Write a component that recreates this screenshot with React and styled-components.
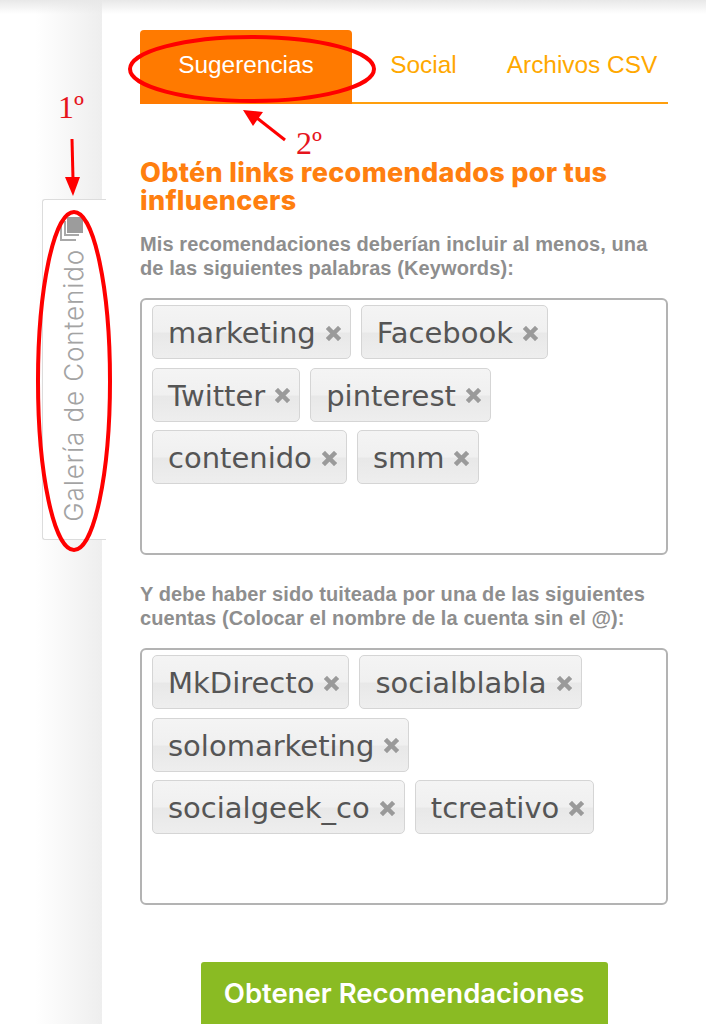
import React from 'react'
import styled, { createGlobalStyle } from 'styled-components'

const GlobalStyle = createGlobalStyle`
  html, body {
    margin: 0;
    padding: 0;
    background: #fff;
  }
`

const Page = styled.div`
  position: relative;
  display: flex;
  width: 706px;
  height: 1024px;
  overflow: hidden;
  background: #fff;
  &::before {
    content: '';
    position: absolute;
    top: 0;
    left: 0;
    right: 0;
    height: 14px;
    background: linear-gradient(to bottom, #e8e8e8, rgba(255, 255, 255, 0));
  }
`

const Rail = styled.aside`
  flex: 0 0 102px;
  min-width: 0;
  box-sizing: border-box;
  padding: 199px 0 0 42px;
  background: linear-gradient(to right, #fff 35%, #eeeeee 100%);
`

const SideTab = styled.div`
  position: relative;
  box-sizing: border-box;
  display: flex;
  flex-direction: column;
  align-items: center;
  width: 64px;
  height: 341px;
  padding: 17px 6px 0 0;
  background: #fff;
  border: 1px solid #dcdcdc;
  border-right: 0;
  border-radius: 3px 0 0 3px;
`

const SideLabel = styled.span`
  writing-mode: vertical-rl;
  transform: rotate(180deg);
  margin: 8px 0 0 4px;
  font-family: 'Inter', sans-serif;
  font-size: 26px;
  font-weight: 300;
  line-height: 30px;
  letter-spacing: 0.9px;
  white-space: nowrap;
  color: #a3a3a3;
`

const Main = styled.main`
  flex: 0 0 528px;
  margin-left: 38px;
  padding-top: 30px;
`

const Tabs = styled.nav`
  display: flex;
  height: 74px;
  border-bottom: 2px solid #ff9f0d;
  box-sizing: border-box;
`

const Tab = styled.div`
  display: flex;
  justify-content: center;
  box-sizing: border-box;
  flex: none;
  width: ${(p) => p.$width}px;
  margin-left: ${(p) => p.$gap || 0}px;
  padding-top: 20px;
  height: 74px;
  font-family: 'Liberation Sans', Arial, sans-serif;
  font-size: 24.4px;
  line-height: 30px;
  white-space: nowrap;
  color: ${(p) => (p.$active ? '#fff' : '#ffa800')};
  background: ${(p) => (p.$active ? '#ff7a00' : 'transparent')};
  border-radius: ${(p) => (p.$active ? '4px 4px 0 0' : '0')};
`

const Heading = styled.h1`
  margin: 55px 0 0;
  font-family: 'Inter', sans-serif;
  font-size: 27px;
  font-weight: 800;
  line-height: 28px;
  letter-spacing: 0.3px;
  color: #ff7f0f;
`

const Label = styled.p`
  margin: ${(p) => p.$top}px 0 0;
  font-family: 'Liberation Sans', Arial, sans-serif;
  font-size: 20px;
  font-weight: 700;
  line-height: 24px;
  letter-spacing: 0.1px;
  color: #8e8e8e;
`

const TagBox = styled.div`
  box-sizing: border-box;
  display: flex;
  flex-wrap: wrap;
  align-content: flex-start;
  gap: 8.5px 10px;
  height: 257px;
  margin-top: ${(p) => p.$top}px;
  padding: 5px 10px;
  border: 2px solid #b3b3b3;
  border-radius: 6px;
`

const Tag = styled.span`
  box-sizing: border-box;
  display: inline-flex;
  align-items: center;
  height: 54px;
  padding: 2px 9px 0 15px;
  border: 1px solid #d5d5d5;
  border-radius: 5px;
  background: linear-gradient(to bottom, #f4f4f4 0%, #f0f0f0 50%, #e8e8e8 52%, #eeeeee 100%);
  font-family: 'DejaVu Sans', Verdana, sans-serif;
  font-size: 29px;
  line-height: 32px;
  color: #555;
`

const TagRemove = styled.svg`
  width: 15px;
  height: 15px;
  margin-left: 10px;
  flex: none;
`

const Footer = styled.div`
  display: flex;
  justify-content: center;
  margin-top: 57px;
`

const Submit = styled.button`
  box-sizing: border-box;
  width: 407px;
  height: 64px;
  padding: 0;
  border: 0;
  border-bottom: 2px solid #76a01c;
  border-radius: 3px 3px 0 0;
  background: #8abb23;
  font-family: 'Inter', sans-serif;
  font-size: 27.5px;
  font-weight: 600;
  color: #fff;
  white-space: nowrap;
`

const Notes = styled.svg`
  position: absolute;
  top: 0;
  left: 0;
  width: 706px;
  height: 1024px;
  pointer-events: none;
`

const NoteText = styled.text`
  font-family: 'Liberation Serif', 'Times New Roman', serif;
  font-size: 32px;
  fill: #e6141c;
`

const StackIcon = () => (
  <svg width="24" height="24" viewBox="0 0 24 24" fill="#a8a8a8" aria-hidden="true">
    <rect x="7" y="0" width="16" height="16" fill="#9c9c9c" />
    <path d="M4 4h2v13h13v2H4z" />
    <path d="M0 8h2v14h14v2H0z" />
  </svg>
)

const RemoveIcon = () => (
  <TagRemove viewBox="0 0 15 15" aria-hidden="true">
    <path d="M3 3l9 9M12 3l-9 9" stroke="#9a9a9a" strokeWidth="4.5" strokeLinecap="square" />
  </TagRemove>
)

const keywords = ['marketing', 'Facebook', 'Twitter', 'pinterest', 'contenido', 'smm']
const accounts = ['MkDirecto', 'socialblabla', 'solomarketing', 'socialgeek_co', 'tcreativo']

const TagList = ({ items, top }) => (
  <TagBox $top={top}>
    {items.map((item) => (
      <Tag key={item}>
        {item}
        <RemoveIcon />
      </Tag>
    ))}
  </TagBox>
)

const App = () => {
  return (
    <Page>
      <GlobalStyle />
      <Rail>
        <SideTab>
          <StackIcon />
          <SideLabel>Galería de Contenido</SideLabel>
        </SideTab>
      </Rail>
      <Main>
        <Tabs>
          <Tab $active $width={212}>Sugerencias</Tab>
          <Tab $width={67} $gap={38}>Social</Tab>
          <Tab $width={150} $gap={50}>Archivos CSV</Tab>
        </Tabs>
        <Heading>Obtén links recomendados por tus influencers</Heading>
        <Label $top={17}>
          Mis recomendaciones deberían incluir al menos, una de las siguientes palabras (Keywords):
        </Label>
        <TagList items={keywords} top={18} />
        <Label $top={27}>
          Y debe haber sido tuiteada por una de las siguientes cuentas (Colocar el nombre de la cuenta sin el @):
        </Label>
        <TagList items={accounts} top={18} />
        <Footer>
          <Submit>Obtener Recomendaciones</Submit>
        </Footer>
      </Main>
      {/* anotaciones en rojo encima de la captura */}
      <Notes viewBox="0 0 706 1024" aria-hidden="true">
        <NoteText x="58" y="118">1º</NoteText>
        <NoteText x="296" y="154">2º</NoteText>
        <ellipse cx="252" cy="69" rx="122" ry="32" fill="none" stroke="#f00" strokeWidth="4" />
        <ellipse cx="74" cy="381" rx="36" ry="169" fill="none" stroke="#f00" strokeWidth="4" />
        <path d="M72 139l1 40" stroke="#f00" strokeWidth="3" />
        <path d="M65 177h15l-7 19z" fill="#f00" />
        <path d="M285 140l-28-22" stroke="#f00" strokeWidth="3" />
        <path d="M243 110l20 2-10 14z" fill="#f00" />
      </Notes>
    </Page>
  )
}

export default App
